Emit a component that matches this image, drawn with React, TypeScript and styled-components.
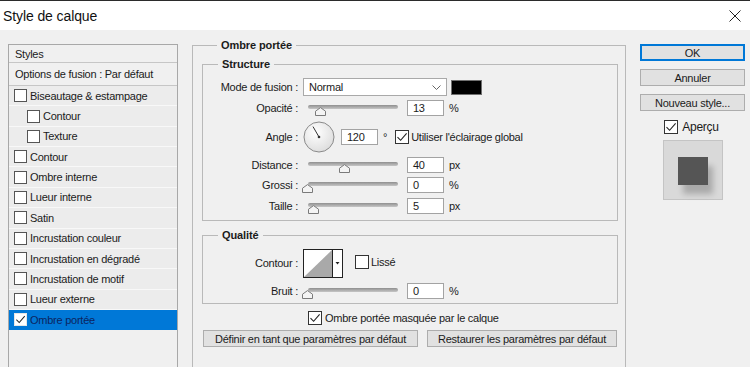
import React from 'react';
import styled, { createGlobalStyle } from 'styled-components';

const GlobalStyle = createGlobalStyle`
  html, body { margin: 0; padding: 0; background: #f0f0f0; overflow: hidden; }
  body {
    font-family: "Liberation Sans", Arial, sans-serif;
    font-size: 11px;
    letter-spacing: -0.25px;
    color: #1b1b1b;
  }
  * { box-sizing: border-box; }
`;

const Window = styled.div`
  width: 750px;
  height: 367px;
  overflow: hidden;
  display: flex;
  flex-direction: column;
  background: #f0f0f0;
`;

const TitleBar = styled.div`
  height: 30px;
  flex: none;
  background: #fff;
  border-top: 1px solid #2b2b2b;
  display: flex;
  align-items: center;
  justify-content: space-between;
  padding: 0 9px 0 3px;
`;

const Title = styled.div`
  font-size: 14px;
  letter-spacing: -0.1px;
  color: #111;
`;

const Body = styled.div`
  flex: 1;
  min-height: 0;
  display: flex;
  align-items: flex-start;
  padding: 14px 0 0 8px;
`;

/* left list of styles */
const StylesPanel = styled.div`
  width: 170px;
  height: 340px;
  flex: none;
  border: 1px solid #a8a8a8;
`;

const PanelHeader = styled.div<{ $h: number }>`
  height: ${p => p.$h}px;
  border-bottom: 1px solid #c6c6c6;
  padding-left: 6px;
  display: flex;
  align-items: center;
`;

const StyleItem = styled.div<{ $indent?: boolean; $selected?: boolean }>`
  height: 20.36px;
  display: flex;
  align-items: center;
  gap: 3px;
  padding-left: ${p => (p.$indent ? 18 : 5)}px;
  background: ${p => (p.$selected ? '#0078d7' : '#ececec')};
  border-bottom: 1px solid ${p => (p.$selected ? '#0078d7' : '#f8f8f8')};
  color: ${p => (p.$selected ? '#0c2460' : '#1b1b1b')};
`;

/* checkbox */
const Box = styled.span<{ $size: number; $tone: string }>`
  width: ${p => p.$size}px;
  height: ${p => p.$size}px;
  flex: none;
  background: #fff;
  border: 1px solid ${p => p.$tone};
  display: inline-flex;
  align-items: center;
  justify-content: center;
`;

const Check = ({ size = 14, checked = false, tone = '#333' }: { size?: number; checked?: boolean; tone?: string }) => (
  <Box $size={size} $tone={tone}>
    {checked && (
      <svg width={size - 2} height={size - 2} viewBox="0 0 12 12">
        <path d="M1.5 6.2 L4.6 9.3 L10.6 2.4" fill="none" stroke="#222" strokeWidth="1.1" />
      </svg>
    )}
  </Box>
);

/* middle column */
const Middle = styled.div`
  width: 434px;
  flex: none;
  margin: -5px 0 0 14px;
`;

const Group = styled.fieldset<{ $pad: string; $h?: number }>`
  margin: 0;
  min-width: 0;
  border: 1px solid #b9b9b9;
  padding: ${p => p.$pad};
  ${p => (p.$h ? `height: ${p.$h}px;` : '')}
`;

const Legend = styled.legend`
  margin-left: 15px;
  padding: 0 4px;
  font-weight: bold;
  font-size: 11px;
  line-height: 12px;
  letter-spacing: -0.1px;
`;

const FieldRow = styled.div<{ $h: number; $mt: number }>`
  display: flex;
  align-items: center;
  height: ${p => p.$h}px;
  margin-top: ${p => p.$mt}px;
`;

const FieldLabel = styled.span`
  width: 95px;
  flex: none;
  text-align: right;
  margin-right: 5px;
`;

const Select = styled.div`
  width: 144px;
  height: 18px;
  background: #fff;
  border: 1px solid #a9a9a9;
  display: flex;
  align-items: center;
  justify-content: space-between;
  padding: 0 5px 0 5px;
`;

const Swatch = styled.div`
  width: 31px;
  height: 15px;
  margin-left: 4px;
  background: #000;
  border: 1px solid #707070;
`;

const Slider = styled.div`
  position: relative;
  width: 100px;
  height: 16px;
  flex: none;
  margin-right: 4px;
`;

const Track = styled.div`
  position: absolute;
  left: 5px;
  right: 5px;
  top: 5px;
  height: 4px;
  border-radius: 2px;
  background: linear-gradient(#8f8f8f, #c6c6c6);
`;

const Thumb = styled.svg<{ $x: number }>`
  position: absolute;
  top: 7px;
  left: ${p => p.$x - 5.5}px;
`;

const NumberInput = styled.div<{ $ml?: number }>`
  width: 37px;
  height: 16px;
  flex: none;
  margin-left: ${p => p.$ml ?? 0}px;
  background: #fff;
  border: 1px solid #a3a3a3;
  padding-left: 5px;
  display: flex;
  align-items: center;
`;

const Unit = styled.span`
  margin-left: 5px;
`;

const Inline = styled.div<{ $ml: number; $mt?: number }>`
  display: flex;
  align-items: center;
  gap: 2px;
  margin-left: ${p => p.$ml}px;
  ${p => (p.$mt !== undefined ? `align-self: flex-start; margin-top: ${p.$mt}px;` : '')}
`;

const MaskRow = styled.div`
  display: flex;
  align-items: center;
  gap: 3px;
  height: 14px;
  margin: 7px 0 0 106px;
`;

const ButtonRow = styled.div`
  display: flex;
  gap: 9px;
  margin: 5px 0 0 1px;
`;

const Button = styled.div<{ $w?: number; $primary?: boolean }>`
  width: ${p => (p.$w ? `${p.$w}px` : '100%')};
  height: 17px;
  flex: none;
  background: #e1e1e1;
  border: 1px solid ${p => (p.$primary ? '#0078d7' : '#adadad')};
  ${p => (p.$primary ? 'box-shadow: inset 0 0 0 1px #0078d7;' : '')}
  display: flex;
  align-items: center;
  justify-content: center;
`;

/* right column */
const Side = styled.div`
  width: 105px;
  flex: none;
  margin-left: 14px;
  display: flex;
  flex-direction: column;
  align-items: center;
  gap: 8px;
`;

const PreviewToggle = styled.div`
  display: flex;
  align-items: center;
  gap: 4px;
  margin: 1px 0 0 -2px;
  font-size: 12px;
`;

const Preview = styled.div`
  width: 60px;
  height: 60px;
  margin-top: -2px;
  background: #d9d9d9;
  border: 1px solid #c4c4c4;
  display: flex;
  padding: 16px 0 0 14px;
`;

const PreviewSquare = styled.div`
  width: 30px;
  height: 28px;
  background: #555;
  box-shadow: 5px 9px 6px rgba(0, 0, 0, 0.22);
`;

const SliderField = ({ x }: { x: number }) => (
  <Slider>
    <Track />
    <Thumb $x={x} width="11" height="9" viewBox="0 0 11 9">
      <path d="M0.5 8.5 V4.2 L5.5 0.6 L10.5 4.2 V8.5 Z" fill="#f4f4f4" stroke="#7a7a7a" />
    </Thumb>
  </Slider>
);

const styleItems: { label: string; indent?: boolean; selected?: boolean }[] = [
  { label: 'Biseautage & estampage' },
  { label: 'Contour', indent: true },
  { label: 'Texture', indent: true },
  { label: 'Contour' },
  { label: 'Ombre interne' },
  { label: 'Lueur interne' },
  { label: 'Satin' },
  { label: 'Incrustation couleur' },
  { label: 'Incrustation en dégradé' },
  { label: 'Incrustation de motif' },
  { label: 'Lueur externe' },
  { label: 'Ombre portée', selected: true },
];

export default function App() {
  return (
    <Window>
      <GlobalStyle />
      <TitleBar>
        <Title>Style de calque</Title>
        <svg width="12" height="12" viewBox="0 0 12 12">
          <path d="M0.5 0.5 L11.5 11.5 M11.5 0.5 L0.5 11.5" stroke="#222" strokeWidth="1" />
        </svg>
      </TitleBar>
      <Body>
        <StylesPanel>
          <PanelHeader $h={18}>Styles</PanelHeader>
          <PanelHeader $h={23}>Options de fusion : Par défaut</PanelHeader>
          {styleItems.map((it, i) => (
            <StyleItem key={i} $indent={it.indent} $selected={it.selected}>
              <Check size={13} checked={it.selected} tone={it.selected ? '#e6e6e6' : '#555'} />
              <span>{it.label}</span>
            </StyleItem>
          ))}
        </StylesPanel>

        <Middle>
          <Group $pad="7px 7px 0 9px" $h={345}>
            <Legend>Ombre portée</Legend>
            <Group $pad="0 0 6px 0">
              <Legend>Structure</Legend>
              <FieldRow $h={18} $mt={8}>
                <FieldLabel>Mode de fusion :</FieldLabel>
                <Select>
                  <span>Normal</span>
                  <svg width="9" height="5" viewBox="0 0 9 5">
                    <path d="M0.5 0.5 L4.5 4.5 L8.5 0.5" fill="none" stroke="#666" />
                  </svg>
                </Select>
                <Swatch />
              </FieldRow>
              <FieldRow $h={16} $mt={4}>
                <FieldLabel>Opacité :</FieldLabel>
                <SliderField x={17} />
                <NumberInput>13</NumberInput>
                <Unit>%</Unit>
              </FieldRow>
              <FieldRow $h={32} $mt={5}>
                <FieldLabel>Angle :</FieldLabel>
                <svg width="32" height="32" viewBox="0 0 32 32" style={{ flex: 'none' }}>
                  <defs>
                    <radialGradient id="dial" cx="0.4" cy="0.35" r="0.7">
                      <stop offset="0" stopColor="#ffffff" />
                      <stop offset="1" stopColor="#dcdcdc" />
                    </radialGradient>
                  </defs>
                  <circle cx="16" cy="16" r="15" fill="url(#dial)" stroke="#8a8a8a" />
                  <path d="M16 16 L10 5.6" stroke="#333" strokeWidth="1" />
                  <circle cx="16" cy="16" r="1.3" fill="#333" />
                </svg>
                <NumberInput $ml={6}>120</NumberInput>
                <Unit>°</Unit>
                <Inline $ml={8}>
                  <Check checked />
                  <span>Utiliser l'éclairage global</span>
                </Inline>
              </FieldRow>
              <FieldRow $h={16} $mt={4}>
                <FieldLabel>Distance :</FieldLabel>
                <SliderField x={41} />
                <NumberInput>40</NumberInput>
                <Unit>px</Unit>
              </FieldRow>
              <FieldRow $h={16} $mt={4}>
                <FieldLabel>Grossi :</FieldLabel>
                <SliderField x={4} />
                <NumberInput>0</NumberInput>
                <Unit>%</Unit>
              </FieldRow>
              <FieldRow $h={16} $mt={5}>
                <FieldLabel>Taille :</FieldLabel>
                <SliderField x={10} />
                <NumberInput>5</NumberInput>
                <Unit>px</Unit>
              </FieldRow>
            </Group>

            <Group $pad="0 0 4px 0" style={{ marginTop: 8 }}>
              <Legend>Qualité</Legend>
              <FieldRow $h={28} $mt={8}>
                <FieldLabel>Contour :</FieldLabel>
                <svg width="40" height="29" viewBox="0 0 40 29" style={{ flex: 'none' }}>
                  <rect x="0.5" y="0.5" width="39" height="28" fill="#fff" stroke="#222" />
                  <path d="M1 28 L29 1 L29 28 Z" fill="#a9a9a9" />
                  <path d="M29.5 0.5 V28.5" stroke="#222" />
                  <path d="M32.5 13 L36.5 13 L34.5 15.5 Z" fill="#222" />
                </svg>
                <Inline $ml={12} $mt={6}>
                  <Check />
                  <span>Lissé</span>
                </Inline>
              </FieldRow>
              <FieldRow $h={16} $mt={6}>
                <FieldLabel>Bruit :</FieldLabel>
                <SliderField x={4} />
                <NumberInput>0</NumberInput>
                <Unit>%</Unit>
              </FieldRow>
            </Group>

            <MaskRow>
              <Check checked />
              <span>Ombre portée masquée par le calque</span>
            </MaskRow>
            <ButtonRow>
              <Button $w={215}>Définir en tant que paramètres par défaut</Button>
              <Button $w={190}>Restaurer les paramètres par défaut</Button>
            </ButtonRow>
          </Group>
        </Middle>

        <Side>
          <Button $primary>OK</Button>
          <Button>Annuler</Button>
          <Button>Nouveau style...</Button>
          <PreviewToggle>
            <Check checked />
            <span>Aperçu</span>
          </PreviewToggle>
          <Preview>
            <PreviewSquare />
          </Preview>
        </Side>
      </Body>
    </Window>
  );
}
